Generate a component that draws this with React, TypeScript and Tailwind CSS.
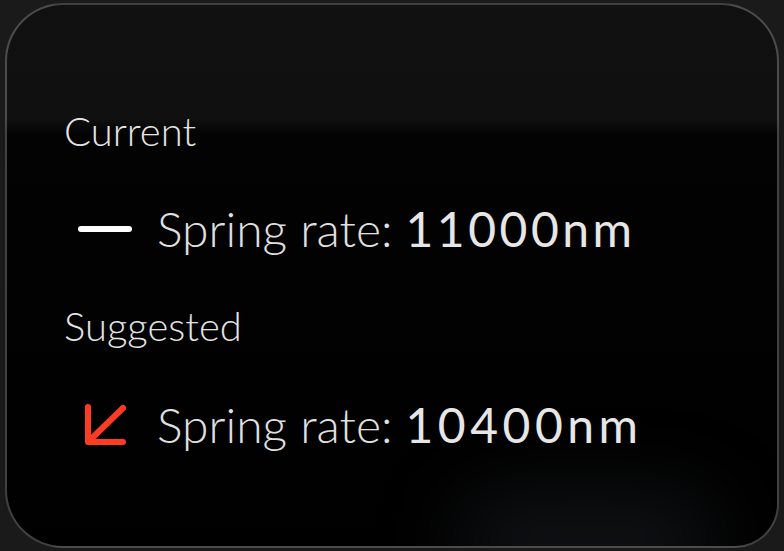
export default function App() {
  return (
    <div className="w-[784px] h-[551px] overflow-hidden bg-[#1a1a1a] pl-[5px] pr-[5px] pt-[3px] font-['Lato',sans-serif]">
      <div className="relative h-[545px] rounded-[58px] rounded-br-[44px] border-2 border-white/25 bg-[linear-gradient(180deg,#111111_0%,#101010_21%,#030303_24%,#000000_100%)] pl-[57px] pt-[102px] overflow-hidden">
        <div className="absolute right-[60px] bottom-[-40px] h-[90px] w-[260px] rounded-full bg-[#2a3038]/40 blur-2xl" />
        <div className="relative flex flex-col">
          <div className="text-[40px] leading-[48px] font-light text-[#e4e4e4]">Current</div>
          <div className="mt-[46px] flex items-center h-[56px]">
            <div className="w-[56px] flex justify-center ml-[13px]">
              <div className="h-[6px] w-[54px] rounded-full bg-white" />
            </div>
            <div className="ml-[24px] text-[48px] leading-[56px] font-light text-[#e0e0e0]">
              Spring rate: <span className="font-normal tracking-[3.5px] text-[#e6e6e6]">11000nm</span>
            </div>
          </div>
          <div className="mt-[45px] text-[40px] leading-[48px] font-light text-[#e4e4e4]">Suggested</div>
          <div className="mt-[47px] flex items-center h-[56px]">
            <div className="w-[56px] flex justify-center ml-[13px]">
              <svg width="46" height="44" viewBox="0 0 46 44" fill="none">
                <path d="M41 5 L7 38" stroke="#ff3b22" strokeWidth="6" strokeLinecap="round" />
                <path d="M6 4 V39 H41" stroke="#ff3b22" strokeWidth="6" strokeLinecap="round" strokeLinejoin="round" />
              </svg>
            </div>
            <div className="ml-[24px] text-[48px] leading-[56px] font-light text-[#e0e0e0]">
              Spring rate: <span className="font-normal tracking-[4.5px] text-[#e6e6e6]">10400nm</span>
            </div>
          </div>
        </div>
      </div>
    </div>
  );
}
